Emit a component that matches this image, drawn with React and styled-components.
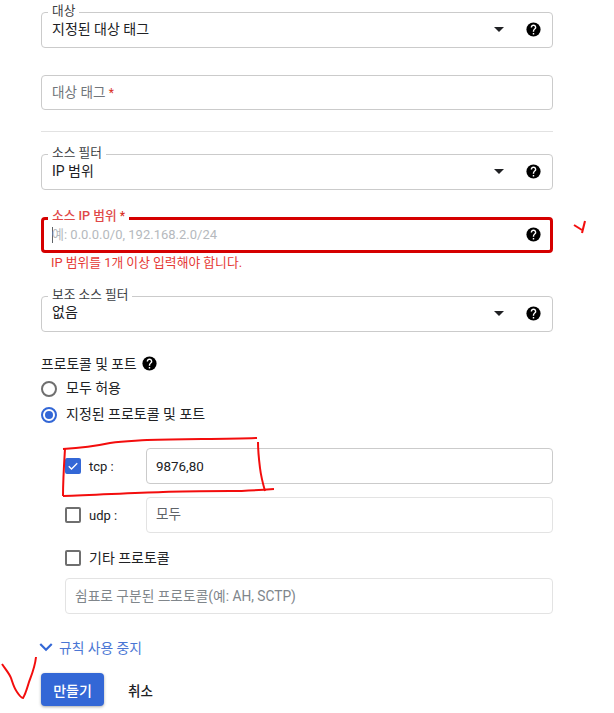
import React from "react";
import styled, { createGlobalStyle } from "styled-components";

const GlobalStyle = createGlobalStyle`
  body {
    margin: 0;
    background: #fff;
    font-family: Roboto, "Noto Sans CJK KR", sans-serif;
    color: #202124;
  }
`;

const Page = styled.div`
  position: relative;
  width: 614px;
  height: 713px;
  overflow: hidden;
  box-sizing: border-box;
  padding: 12px 61px 0 41px;
`;

const Field = styled.div`
  position: relative;
  box-sizing: border-box;
  height: ${(p) => p.$height || 36}px;
  margin-top: ${(p) => p.$top || 0}px;
  padding: 0 ${(p) => (p.$error ? 8 : 10)}px 0 ${(p) => (p.$error ? 8 : p.$inner ? 9 : 10)}px;
  display: flex;
  align-items: center;
  border: ${(p) => (p.$error ? "3px solid #d50000" : `1px solid ${p.$faint ? "#e3e3e3" : "#cbcbcb"}`)};
  border-radius: 4px;
  font-size: 13.4px;
  color: #202124;
`;

const FloatLabel = styled.span`
  position: absolute;
  top: ${(p) => (p.$error ? -11 : -9)}px;
  left: ${(p) => (p.$error ? 4 : 6)}px;
  padding: 0 4px;
  background: #fff;
  font-size: 12.7px;
  line-height: 14px;
  color: ${(p) => (p.$error ? "#e04848" : "#3c4043")};
  font-weight: ${(p) => (p.$error ? 500 : 400)};
`;

const Value = styled.span`
  flex: 1;
  position: relative;
  top: ${(p) => p.$shift || 0}px;
  font-size: ${(p) => p.$size || 14}px;
`;

const Placeholder = styled(Value)`
  color: ${(p) => p.$color || "#80868b"};
`;

const Star = styled.span`
  color: #d93025;
  font-size: 12px;
`;

const Caret = styled.span`
  width: 1px;
  height: 16px;
  background: #5f6368;
  margin-right: -1px;
`;

const Divider = styled.div`
  height: 1px;
  background: #e2e2e2;
  margin: 21px 0 22px;
`;

const ErrorText = styled.div`
  margin: 3px 0 0 10px;
  font-size: 12.8px;
  line-height: 14px;
  color: #e53935;
`;

const SectionTitle = styled.div`
  display: flex;
  align-items: center;
  gap: 4px;
  margin-top: 23px;
  font-size: 13.8px;
  line-height: 16px;
`;

const OptionRow = styled.div`
  display: flex;
  align-items: center;
  gap: 9px;
  height: 26px;
`;

const RadioGroup = styled.div`
  margin-top: 4px;
`;

const Radio = styled.span`
  box-sizing: border-box;
  width: 16px;
  height: 16px;
  border-radius: 50%;
  border: 2px solid ${(p) => (p.$on ? "#3367d6" : "#6f6f6f")};
  display: flex;
  align-items: center;
  justify-content: center;

  &::after {
    content: "";
    display: ${(p) => (p.$on ? "block" : "none")};
    width: 8px;
    height: 8px;
    border-radius: 50%;
    background: #3367d6;
  }
`;

const Protocols = styled.div`
  margin: 20px 0 0 24px;
`;

const PortRow = styled.div`
  display: flex;
  align-items: center;
  margin-top: ${(p) => p.$top || 0}px;
`;

const PortLabel = styled.label`
  width: 81px;
  display: flex;
  align-items: center;
  gap: 8px;
  flex-shrink: 0;
  font-size: 13px;
`;

const PortField = styled(Field)`
  flex: 1;
`;

const Check = styled.span`
  box-sizing: border-box;
  width: 16px;
  height: 16px;
  border-radius: 2px;
  flex-shrink: 0;
  display: flex;
  align-items: center;
  justify-content: center;
  background: ${(p) => (p.$on ? "#3367d6" : "#fff")};
  border: 2px solid ${(p) => (p.$on ? "#3367d6" : "#6f6f6f")};
`;

const OtherRow = styled.div`
  display: flex;
  align-items: center;
  gap: 8px;
  margin-top: 16px;
  height: 18px;
`;

const ToggleLink = styled.div`
  display: flex;
  align-items: center;
  margin: 24px 0 0 -8px;
  height: 18px;
  font-size: 13.8px;
  color: #4a76d4;
`;

const Actions = styled.div`
  display: flex;
  align-items: center;
  gap: 24px;
  margin-top: 17px;
`;

const PrimaryButton = styled.button`
  width: 63px;
  height: 33px;
  border: none;
  border-radius: 4px;
  background: #3367d6;
  color: #fff;
  font: 500 14px Roboto, "Noto Sans CJK KR", sans-serif;
  box-shadow: 0 1px 3px rgba(60, 64, 67, 0.45);
`;

const TextButton = styled.button`
  border: none;
  background: none;
  padding: 0;
  color: #202124;
  font: 500 13.5px Roboto, "Noto Sans CJK KR", sans-serif;
`;

const Ink = styled.svg`
  position: absolute;
  inset: 0;
  pointer-events: none;
`;

const HelpSvg = styled.svg`
  flex-shrink: 0;
  margin-bottom: ${(p) => p.$lift || 0}px;
`;

const ArrowSvg = styled.svg`
  margin: 0 14px 2px 0;
`;

const ChevronSvg = styled.svg`
  flex-shrink: 0;
  margin: 0;
`;

const TickSvg = styled.svg`
  display: block;
`;

const HelpIcon = ({ lift = 2 }) => (
  <HelpSvg $lift={lift} width="17" height="17" viewBox="0 0 24 24">
    <circle cx="12" cy="12" r="10" fill="#000" />
    <path
      fill="#fff"
      d="M13 19h-2v-2h2v2zm2.07-7.75l-.9.92C13.45 12.9 13 13.5 13 15h-2v-.5c0-1.1.45-2.1 1.17-2.83l1.24-1.26c.37-.36.59-.86.59-1.41 0-1.1-.9-2-2-2s-2 .9-2 2H8c0-2.21 1.79-4 4-4s4 1.79 4 4c0 .88-.36 1.68-.93 2.25z"
    />
  </HelpSvg>
);

const DropArrow = () => (
  <ArrowSvg width="24" height="24" viewBox="0 0 24 24" fill="#202124">
    <path d="M7 10l5 5 5-5z" />
  </ArrowSvg>
);

const Tick = () => (
  <TickSvg width="14" height="14" viewBox="0 0 24 24" fill="none" stroke="#fff" strokeWidth="2.6">
    <path d="M3.5 12.5l5.5 5.5L20.5 6.5" />
  </TickSvg>
);

const Chevron = () => (
  <ChevronSvg width="26" height="26" viewBox="0 0 24 24" fill="#3367d6">
    <path d="M7.41 8.59 12 13.17l4.59-4.58L18 10l-6 6-6-6z" />
  </ChevronSvg>
);

const SelectField = ({ label, value, top, shift = -2 }) => (
  <Field $top={top}>
    <FloatLabel>{label}</FloatLabel>
    <Value $shift={shift}>{value}</Value>
    <DropArrow />
    <HelpIcon />
  </Field>
);

export default function App() {
  return (
    <>
      <GlobalStyle />
      <Page>
        <SelectField label="대상" value="지정된 대상 태그" />

        <Field $top={27} $height={35}>
          <Placeholder $color="#70757a" $shift={-2} $size={13.6}>
            대상 태그 <Star>*</Star>
          </Placeholder>
        </Field>

        <Divider />

        <SelectField label="소스 필터" value="IP 범위" />

        <Field $error $top={27}>
          <FloatLabel $error>
            소스 IP 범위 <Star>*</Star>
          </FloatLabel>
          <Caret />
          <Placeholder $color="#b5b9bd" $shift={-2} $size={13}>
            예: 0.0.0.0/0, 192.168.2.0/24
          </Placeholder>
          <HelpIcon />
        </Field>
        <ErrorText>IP 범위를 1개 이상 입력해야 합니다.</ErrorText>

        <SelectField label="보조 소스 필터" value="없음" top={26} shift={-3} />

        <SectionTitle>
          프로토콜 및 포트 <HelpIcon lift={0} />
        </SectionTitle>

        <RadioGroup>
          <OptionRow>
            <Radio />
            <Value $shift={-2}>모두 허용</Value>
          </OptionRow>
          <OptionRow>
            <Radio $on />
            <Value $shift={-2}>지정된 프로토콜 및 포트</Value>
          </OptionRow>
        </RadioGroup>

        <Protocols>
          <PortRow>
            <PortLabel>
              <Check $on>
                <Tick />
              </Check>
              tcp :
            </PortLabel>
            <PortField $inner>9876,80</PortField>
          </PortRow>

          <PortRow $top={13}>
            <PortLabel>
              <Check />
              udp :
            </PortLabel>
            <PortField $inner $faint>
              <Placeholder $color="#5f6368" $shift={-2} $size={13.6}>
                모두
              </Placeholder>
            </PortField>
          </PortRow>

          <OtherRow>
            <Check />
            <Value $shift={-1}>기타 프로토콜</Value>
          </OtherRow>

          <Field $inner $faint $top={11}>
            <Placeholder $color="#80868b" $shift={-1} $size={13.75}>
              쉼표로 구분된 프로토콜(예: AH, SCTP)
            </Placeholder>
          </Field>
        </Protocols>

        <ToggleLink>
          <Chevron />
          규칙 사용 중지
        </ToggleLink>

        <Actions>
          <PrimaryButton>만들기</PrimaryButton>
          <TextButton>취소</TextButton>
        </Actions>

        {/* red pen marks drawn over the screenshot */}
        <Ink width="614" height="713" viewBox="0 0 614 713" fill="none" stroke="#f30d0d" strokeWidth="2">
          <path d="M63 449 C80 448 96 446 110 443 C125 441 135 441 147 440 C190 439 225 439 257 438" />
          <path d="M258 442 C258 452 259 460 260 468 C261 476 263 484 265 491" />
          <path d="M274 489 C260 490 245 491 230 491 C205 491 185 491 163 492 C130 493 95 495 63 496" />
          <path d="M65 449 C64 465 63 480 63 496" />
          <path d="M2 664 C6 670 9 673 11 678 C13 684 14 688 17 692 C19 695 21 698 23 698 C26 693 27 688 29 682 C32 674 35 667 36 657" />
          <path d="M574 225 L582 230" />
          <path d="M585 221 L582 233" />
        </Ink>
      </Page>
    </>
  );
}
